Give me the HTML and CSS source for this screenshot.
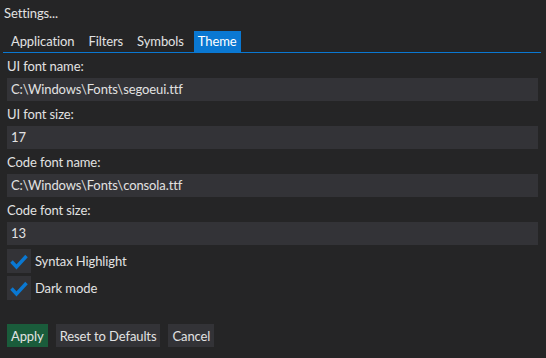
FILE: index.html
```html
<!DOCTYPE html>
<html>
<head>
    <meta charset="UTF-8">
    <link rel="stylesheet" href="styles.css">
</head>
<body>
    <div class="window">
        <div class="title">Settings...</div>

        <div class="tab-bar">
            <div class="tab">Application</div>
            <div class="tab">Filters</div>
            <div class="tab">Symbols</div>
            <div class="tab active">Theme</div>
        </div>

        <div class="form">
            <div class="label">UI font name:</div>
            <div class="field">C:\Windows\Fonts\segoeui.ttf</div>

            <div class="label">UI font size:</div>
            <div class="field">17</div>

            <div class="label">Code font name:</div>
            <div class="field">C:\Windows\Fonts\consola.ttf</div>

            <div class="label">Code font size:</div>
            <div class="field">13</div>

            <div class="checks">
                <div class="check-row">
                    <span class="checkbox">
                        <svg width="24" height="24" viewBox="0 0 24 24"><polyline points="4.5,12.5 9.5,18 19.5,7" fill="none" stroke="#0a78d2" stroke-width="3.4"/></svg>
                    </span>
                    <span>Syntax Highlight</span>
                </div>
                <div class="check-row">
                    <span class="checkbox">
                        <svg width="24" height="24" viewBox="0 0 24 24"><polyline points="4.5,12.5 9.5,18 19.5,7" fill="none" stroke="#0a78d2" stroke-width="3.4"/></svg>
                    </span>
                    <span>Dark mode</span>
                </div>
            </div>
        </div>

        <div class="buttons">
            <button class="btn btn-apply">Apply</button>
            <button class="btn">Reset to Defaults</button>
            <button class="btn">Cancel</button>
        </div>
    </div>
</body>
</html>
```

FILE: styles.css
```css
body {
    margin: 0;
    background: #252526;
    color: #e2e2e2;
    font-family: Lato, "Noto Sans", sans-serif;
    font-size: 13px;
    line-height: 17px;
    letter-spacing: -0.1px;
}

.window {
    padding: 3px 8px 0 7px;
}

.title {
    margin-left: -3px;
    line-height: 20px;
}

.tab-bar {
    display: flex;
    gap: 6px;
    margin: 8px -3px 0 -4px;
    padding-left: 4px;
    border-bottom: 1px solid #0a78d2;
}

.tab {
    padding: 2px 4px;
    line-height: 17px;
}

.tab.active {
    background: #0a78d2;
    color: #fff;
}

.form {
    display: flex;
    flex-direction: column;
    gap: 4px;
    padding-top: 4px;
}

.label {
    padding-top: 1px;
    margin-bottom: -1px;
}

.field {
    height: 23px;
    line-height: 23px;
    padding: 0 4px;
    background: #333337;
}

.checks {
    display: flex;
    flex-direction: column;
    gap: 3px;
}

.check-row {
    display: flex;
    align-items: center;
    gap: 4px;
}

.checkbox {
    width: 24px;
    height: 24px;
    background: #333337;
}

.checkbox svg {
    display: block;
}

.buttons {
    display: flex;
    gap: 8px;
    margin-top: 24px;
}

.btn {
    height: 23px;
    padding: 0 4px;
    border: none;
    background: #333337;
    color: #e2e2e2;
    font-family: inherit;
    font-size: 13px;
    letter-spacing: inherit;
}

.btn-apply {
    background: #1a5c3b;
}
```
